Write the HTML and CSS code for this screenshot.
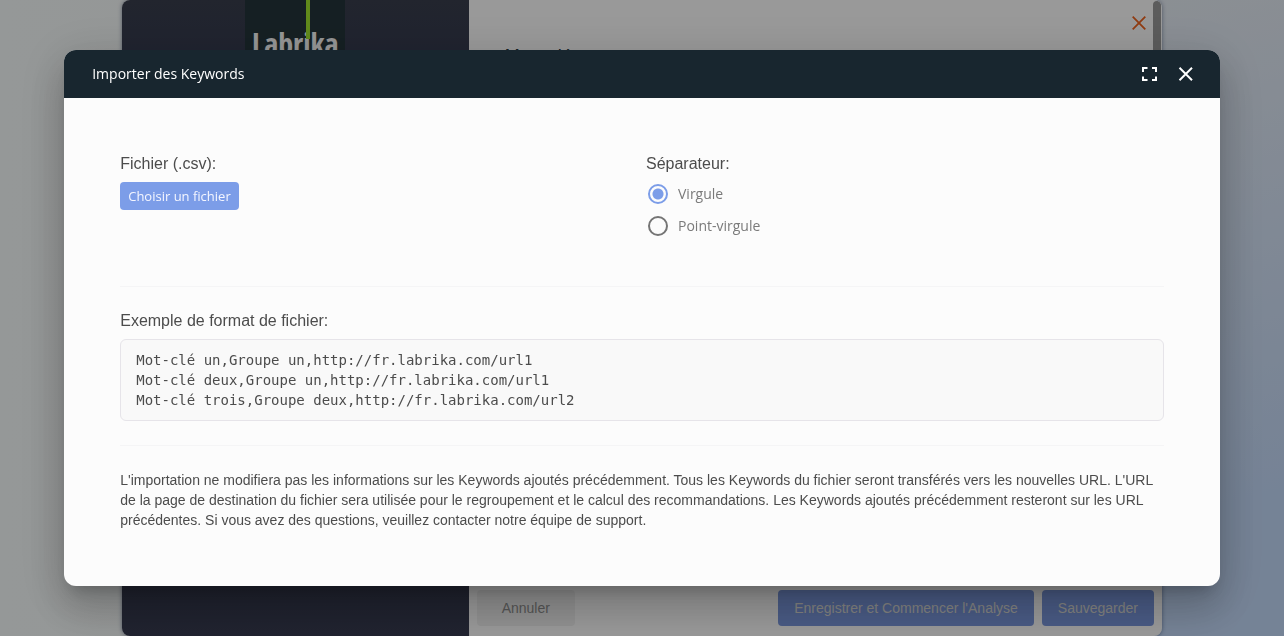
FILE: index.html
```html
<!DOCTYPE html>
<html lang="fr">
<head>
<meta charset="utf-8">
<meta name="viewport" content="width=device-width, initial-scale=1">
<title>Importer des Keywords</title>
<link rel="stylesheet" href="styles.css">
</head>
<body>
<div class="page">
  <section class="wizard" aria-label="Projet">
    <aside class="sidebar">
      <div class="logo"><span class="logo-text">Labrika</span><span class="logo-line"></span></div>
    </aside>
    <div class="wizard-main">
      <h2 class="wizard-title">Mots clés</h2>
      <button class="wizard-close" type="button" aria-label="Fermer le projet">
        <svg width="14" height="14" viewBox="0 0 14 14" fill="none" stroke="currentColor" stroke-width="1.8"><path d="M.7.7l12.6 12.6M13.3.7L.7 13.3"/></svg>
      </button>
      <div class="scroll-thumb"></div>
      <footer class="wizard-footer">
        <button class="btn btn-plain" type="button">Annuler</button>
        <div class="footer-actions">
          <button class="btn btn-main" type="button">Enregistrer et Commencer l'Analyse</button>
          <button class="btn btn-main" type="button">Sauvegarder</button>
        </div>
      </footer>
    </div>
  </section>
</div>
<div class="overlay">
  <div class="modal" role="dialog" aria-modal="true" aria-labelledby="modal-title">
    <header class="modal-header">
      <h1 class="modal-title" id="modal-title">Importer des Keywords</h1>
      <button class="icon-btn" type="button" aria-label="Plein écran">
        <svg width="24" height="24" viewBox="0 0 24 24" fill="none" stroke="currentColor" stroke-width="2"><path d="M5 10V6H9.500M14 6H18V10M18 14.500V18H14M9.500 18H5V14.500"/></svg>
      </button>
      <button class="icon-btn" type="button" aria-label="Fermer">
        <svg width="24" height="24" viewBox="0 0 24 24" fill="none" stroke="currentColor" stroke-width="2"><path d="M5.500 5.800L18 18.300M18 5.800L5.500 18.300"/></svg>
      </button>
    </header>
    <div class="modal-body">
      <form class="form">
        <div>
          <div class="label">Fichier (.csv):</div>
          <button class="file-btn" type="button">Choisir un fichier</button>
        </div>
        <div>
          <div class="label" id="sep-label">Séparateur:</div>
          <div class="radios" role="radiogroup" aria-labelledby="sep-label">
            <label class="radio"><input type="radio" name="sep" checked>Virgule</label>
            <label class="radio"><input type="radio" name="sep">Point-virgule</label>
          </div>
        </div>
      </form>
      <hr class="rule">
      <div class="label">Exemple de format de fichier:</div>
      <pre class="sample">Mot-clé un,Groupe un,http://fr.labrika.com/url1
Mot-clé deux,Groupe un,http://fr.labrika.com/url1
Mot-clé trois,Groupe deux,http://fr.labrika.com/url2</pre>
      <hr class="rule">
      <p class="note">L'importation ne modifiera pas les informations sur les Keywords ajoutés précédemment. Tous les Keywords du fichier seront transférés vers les nouvelles URL. L'URL de la page de destination du fichier sera utilisée pour le regroupement et le calcul des recommandations. Les Keywords ajoutés précédemment resteront sur les URL précédentes. Si vous avez des questions, veuillez contacter notre équipe de support.</p>
    </div>
  </div>
</div>
</body>
</html>
```
FILE: styles.css
```css
* { box-sizing: border-box; }
html, body { height: 100%; }
body {
  margin: 0;
  font-family: "Liberation Sans", Arial, sans-serif;
  font-size: 14px;
  line-height: 20px;
  color: #4c4c4c;
  overflow: hidden;
}
button { font: inherit; border: 0; cursor: pointer; }

.page {
  height: 100%;
  display: flex;
  justify-content: center;
  background: linear-gradient(to right, #f9fdfd 0%, #f8fbfa 35%, transparent 80%), linear-gradient(165deg, #f0f4f6 0%, #e9eff6 30%, #c4dafa 85%);
}
.wizard {
  width: 81%;
  display: flex;
  border-radius: 8px;
  overflow: hidden;
  box-shadow: 0 0 4px rgba(20, 40, 80, .5);
}
.sidebar {
  flex: 1;
  display: flex;
  justify-content: center;
  align-items: flex-start;
  background: linear-gradient(#393e4d, #343a52 12%, #31364a 85%, #373b50);
}
.logo {
  position: relative;
  width: 100px;
  height: 80px;
  padding-top: 28px;
  background: #24353b;
  text-align: center;
}
.logo-text {
  color: #fafafa;
  font: bold 30px/32px "Liberation Sans Narrow", "Open Sans Condensed", "Liberation Sans", sans-serif;
}
.logo-line {
  position: absolute;
  top: 0;
  left: 61px;
  width: 4px;
  height: 39px;
  background: #a2e62e;
}
.wizard-main {
  position: relative;
  flex: 2;
  display: flex;
  flex-direction: column;
  background: #fff;
}
.wizard-title {
  margin: 0;
  padding: 44px 36px 0;
  font-size: 18px;
  font-weight: normal;
  line-height: 24px;
  color: #25363d;
}
.wizard-close {
  position: absolute;
  top: 16px;
  right: 16px;
  padding: 0;
  width: 14px;
  height: 14px;
  background: none;
  color: #f0641e;
}
.wizard-close svg { display: block; }
.scroll-thumb {
  position: absolute;
  top: 1px;
  right: 1px;
  width: 8px;
  height: 120px;
  border-radius: 4px;
  background: #999;
}
.wizard-footer {
  margin-top: auto;
  padding: 8px 8px 10px;
  display: flex;
  justify-content: space-between;
}
.footer-actions { display: flex; gap: 8px; }
.btn { height: 36px; border-radius: 4px; }
.btn-plain { padding: 0 25px; background: #f2f2f2; color: #909090; }
.btn-main { padding: 0 16px; background: #7b98de; color: #dcdcd8; }

.overlay {
  position: fixed;
  inset: 0;
  display: flex;
  align-items: center;
  justify-content: center;
  background: rgba(0, 0, 0, .4);
}
.modal {
  width: 90%;
  border-radius: 12px;
  overflow: hidden;
  background: #fcfcfc;
  box-shadow: 0 11px 15px -7px rgba(0, 0, 0, .2), 0 24px 38px 3px rgba(0, 0, 0, .14), 0 9px 46px 8px rgba(0, 0, 0, .12);
}
.modal-header {
  display: flex;
  align-items: center;
  gap: 12px;
  height: 48px;
  padding: 0 22px 0 28px;
  background: #18262f;
  color: #fff;
}
.modal-title {
  flex: 1;
  margin: 0;
  font: 14px/20px "Open Sans", sans-serif;
}
.icon-btn { padding: 0; width: 24px; height: 24px; background: none; color: inherit; }
.icon-btn svg { display: block; }
.modal-body { padding: 56px; }
.form {
  display: grid;
  grid-template-columns: 1fr 1fr;
  gap: 8px;
  padding-bottom: 20px;
}
.label { font-size: 16px; line-height: 20px; }
.file-btn {
  height: 28px;
  margin-top: 8px;
  padding: 0 8px;
  border-radius: 4px;
  background: #7c9de8;
  color: #f4f6ff;
  font: 13px/20px "Open Sans", sans-serif;
}
.radios { padding-top: 4px; }
.radio {
  display: flex;
  align-items: center;
  gap: 10px;
  height: 32px;
  padding-left: 2px;
  font-family: "Open Sans", sans-serif;
  color: #7a7a7a;
}
.radio input {
  appearance: none;
  width: 20px;
  height: 20px;
  margin: 0;
  border: 2px solid #757575;
  border-radius: 50%;
}
.radio input:checked {
  border-color: #7c9de8;
  background: radial-gradient(circle, #7c9de8 5px, transparent 6px);
}
.rule {
  margin: 24px 0;
  border: 0;
  height: 1px;
  background: #f5f5f6;
}
.sample {
  margin: 8px 0 0;
  padding: 10px 15px;
  border: 1px solid #e6e4e9;
  border-radius: 6px;
  background: #f9f9f9;
  font: 14px/20px "DejaVu Sans Mono", monospace;
  overflow-x: auto;
}
.note { margin: 0; }
```
